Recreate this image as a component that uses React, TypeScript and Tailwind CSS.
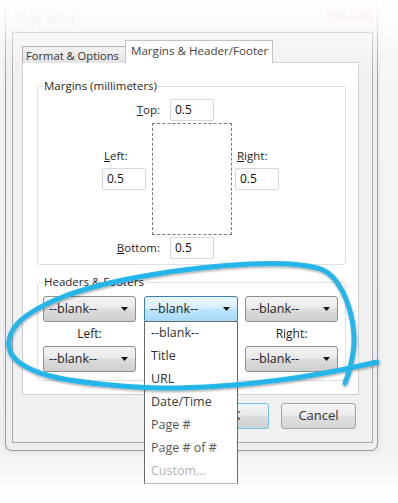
import React from "react";

type Pt = [number, number];

// hand drawn loop, in page coordinates
const loop: Pt[] = [
  [377, 362], [330, 372], [280, 380], [220, 386], [160, 388], [100, 384],
  [50, 376], [20, 363], [9, 347], [14, 328], [32, 312], [65, 296],
  [105, 284], [150, 275], [200, 268], [250, 264], [290, 264], [323, 270],
  [340, 287], [351, 315], [354, 343], [350, 368], [345, 383],
];

function smoothPath(pts: Pt[]) {
  let d = `M${pts[0][0]},${pts[0][1]}`;
  for (let i = 0; i < pts.length - 1; i++) {
    const p0 = pts[i - 1] || pts[i];
    const p1 = pts[i];
    const p2 = pts[i + 1];
    const p3 = pts[i + 2] || p2;
    const c1x = p1[0] + (p2[0] - p0[0]) / 6;
    const c1y = p1[1] + (p2[1] - p0[1]) / 6;
    const c2x = p2[0] - (p3[0] - p1[0]) / 6;
    const c2y = p2[1] - (p3[1] - p1[1]) / 6;
    d += ` C${c1x.toFixed(1)},${c1y.toFixed(1)} ${c2x.toFixed(1)},${c2y.toFixed(1)} ${p2[0]},${p2[1]}`;
  }
  return d;
}

function Arrow() {
  return (
    <svg width="7" height="4" viewBox="0 0 7 4">
      <path d="M0 0h7L3.5 4z" fill="#111" />
    </svg>
  );
}

function Select({ active, width, hidden }: { active?: boolean; width: string; hidden?: boolean }) {
  return (
    <div
      className={
        "h-[26px] rounded-[3px] border flex items-center justify-between pl-[5px] pr-[7px] text-[12.5px] text-[#1e1e1e] " +
        width +
        (active
          ? " border-[#3c7fb1] bg-[linear-gradient(to_bottom,#eaf6fd_0%,#d9f0fc_45%,#bee6fd_50%,#a7d9f5_100%)]"
          : " border-[#8e8f8f] bg-[linear-gradient(to_bottom,#f2f2f2_0%,#ebebeb_45%,#dddddd_50%,#cfcfcf_100%)]")
      }
    >
      {/* the middle one of the bottom row sits under the open list */}
      {hidden ? <span /> : <span>--blank--</span>}
      <Arrow />
    </div>
  );
}

function TextBox({ value }: { value: string }) {
  return (
    <div className="w-[44px] h-[22px] border border-[#d3d6da] rounded-[2px] bg-white pl-[4px] flex items-center text-[12px] text-[#111]">
      {value}
    </div>
  );
}

function GroupLabel({ children }: { children: React.ReactNode }) {
  return (
    <div className="-mt-[9px] ml-[5px] px-[1px] w-fit leading-[16px] bg-white text-[#1e1e1e] whitespace-nowrap">
      {children}
    </div>
  );
}

const options = [
  { label: "--blank--", color: "text-[#333]" },
  { label: "Title", color: "text-[#333]" },
  { label: "URL", color: "text-[#333]" },
  { label: "Date/Time", color: "text-[#3a3a3a]" },
  { label: "Page #", color: "text-[#555]" },
  { label: "Page # of #", color: "text-[#5a5a5a]" },
  { label: "Custom...", color: "text-[#b4b4b4]" },
];

export default function App() {
  return (
    <div className="relative w-[398px] h-[503px] overflow-hidden bg-[linear-gradient(to_bottom,#f6f6f6_0%,#f1f1f1_88%,#ffffff_100%)] font-['Open_Sans',sans-serif] text-[11.5px]">
      {/* window */}
      <div className="ml-[5px] w-[373px] h-[451px] border-x border-b border-[#9c9c9c] rounded-b-[7px] bg-[#eceef0] flex flex-col shadow-[0_2px_6px_rgba(0,0,0,0.08)]">
        <div className="h-[32px] flex items-start justify-between">
          <div className="pl-[8px] pt-[9px] text-[12.5px] text-[#aaa]">Page Setup</div>
          <div className="mr-[4px] mt-[5px] w-[47px] h-[17px] rounded-[3px] border border-[#e9c3b8] bg-[#f0cfc6] flex items-center justify-center text-white text-[11px] font-bold">
            ✕
          </div>
        </div>

        <div className="ml-[6px] w-[361px] h-[411px] border border-[#a8a8a8] bg-[#f0f0f0] pt-[8px] pl-[9px] flex flex-col">
          {/* tabs */}
          <div className="flex items-end h-[22px] -mb-px relative z-10 whitespace-nowrap">
            <div className="w-[103px] h-[17px] border-l border-t border-[#b5b5b5] bg-[linear-gradient(to_bottom,#f3f3f3,#e4e4e4)] pl-[3px] leading-[17px] text-[11.2px] text-[#333]">
              Format &amp; Options
            </div>
            <div className="w-[148px] h-[23px] border-x border-t border-[#c3c3c3] bg-white pl-[5px] leading-[19px] text-[11.6px] text-[#444]">
              Margins &amp; Header/Footer
            </div>
          </div>

          {/* panel */}
          <div className="w-[337px] h-[333px] border border-[#d0d0d0] bg-white flex flex-col">
            {/* margins */}
            <div className="ml-[14px] mt-[23px] w-[309px] h-[179px] border border-[#dde1e4] rounded-[3px] flex flex-col">
              <GroupLabel>Margins (millimeters)</GroupLabel>
              <div className="mt-[5px] h-[22px] flex items-center">
                <div className="w-[122px] text-right text-[#1e1e1e]">
                  <u>T</u>op:
                </div>
                <div className="ml-[10px]">
                  <TextBox value="0.5" />
                </div>
              </div>
              <div className="mt-[2px] h-[112px] flex">
                <div className="ml-[64px] w-[46px] pt-[25px] flex flex-col">
                  <div className="pl-[2px] leading-[16px] text-[#1e1e1e]">
                    <u>L</u>eft:
                  </div>
                  <div className="mt-[4px]">
                    <TextBox value="0.5" />
                  </div>
                </div>
                <div className="ml-[4px] w-[80px] h-[112px] border border-dashed border-[#7a7a7a]" />
                <div className="ml-[3px] w-[45px] pt-[25px] flex flex-col">
                  <div className="pl-[2px] leading-[16px] text-[#1e1e1e]">
                    <u>R</u>ight:
                  </div>
                  <div className="mt-[4px]">
                    <TextBox value="0.5" />
                  </div>
                </div>
              </div>
              <div className="mt-[2px] h-[22px] flex items-center">
                <div className="w-[122px] text-right text-[#1e1e1e]">
                  <u>B</u>ottom:
                </div>
                <div className="ml-[10px]">
                  <TextBox value="0.5" />
                </div>
              </div>
            </div>

            {/* headers & footers */}
            <div className="ml-[14px] mt-[17px] w-[309px] h-[99px] border border-[#dde1e4] rounded-[3px] flex flex-col">
              <GroupLabel>Headers &amp; Footers</GroupLabel>
              <div className="mt-[6px] ml-[5px] flex">
                <Select width="w-[93px]" />
                <div className="ml-[8px] relative">
                  <Select active width="w-[94px]" />
                  <div className="absolute left-0 top-[25px] z-20 w-[94px] border border-[#6a6a6a] border-b-[#b9b9b9] bg-white">
                    {options.map((o) => (
                      <div key={o.label} className={"h-[23px] pl-[6px] flex items-center text-[12.5px] " + o.color}>
                        {o.label}
                      </div>
                    ))}
                  </div>
                </div>
                <div className="ml-[7px]">
                  <Select width="w-[93px]" />
                </div>
              </div>
              <div className="mt-[4px] ml-[5px] flex h-[16px] leading-[16px] text-[12px] text-[#1e1e1e]">
                <div className="w-[93px] text-center">Left:</div>
                <div className="ml-[8px] w-[94px]" />
                <div className="ml-[7px] w-[93px] text-center">Right:</div>
              </div>
              <div className="mt-[4px] ml-[5px] flex">
                <Select width="w-[93px]" />
                <div className="ml-[8px]">
                  <Select hidden width="w-[94px]" />
                </div>
                <div className="ml-[7px]">
                  <Select width="w-[93px]" />
                </div>
              </div>
            </div>
          </div>

          {/* buttons */}
          <div className="mt-[8px] pr-[16px] flex justify-end gap-[12px]">
            <div className="w-[75px] h-[26px] rounded-[3px] border border-[#6fc3ef] bg-[linear-gradient(to_bottom,#f2f2f2_0%,#ebebeb_45%,#dddddd_50%,#cfcfcf_100%)] flex items-center justify-center text-[#1e1e1e] text-[13px]">
              OK
            </div>
            <div className="w-[75px] h-[26px] rounded-[3px] border border-[#a3a3a3] bg-[linear-gradient(to_bottom,#f4f4f4_0%,#ededed_45%,#e0e0e0_50%,#d6d6d6_100%)] flex items-center justify-center text-[#333] text-[13px]">
              Cancel
            </div>
          </div>
        </div>
      </div>

      {/* washed out top of the screenshot */}
      <div className="absolute inset-x-0 top-0 h-[90px] pointer-events-none bg-[linear-gradient(to_bottom,rgba(255,255,255,0.95)_0px,rgba(255,255,255,0.82)_22px,rgba(255,255,255,0.45)_40px,rgba(255,255,255,0.15)_62px,rgba(255,255,255,0)_90px)]" />

      {/* marker loop */}
      <svg className="absolute inset-0 z-30 pointer-events-none" width="398" height="503" viewBox="0 0 398 503">
        <defs>
          <filter id="sh" x="-10%" y="-10%" width="120%" height="130%">
            <feDropShadow dx="0.5" dy="1.5" stdDeviation="0.8" floodColor="#000" floodOpacity="0.35" />
          </filter>
        </defs>
        <path
          d={smoothPath(loop)}
          fill="none"
          stroke="#27b5e8"
          strokeWidth="5"
          strokeLinecap="round"
          strokeLinejoin="round"
          filter="url(#sh)"
        />
      </svg>
    </div>
  );
}
